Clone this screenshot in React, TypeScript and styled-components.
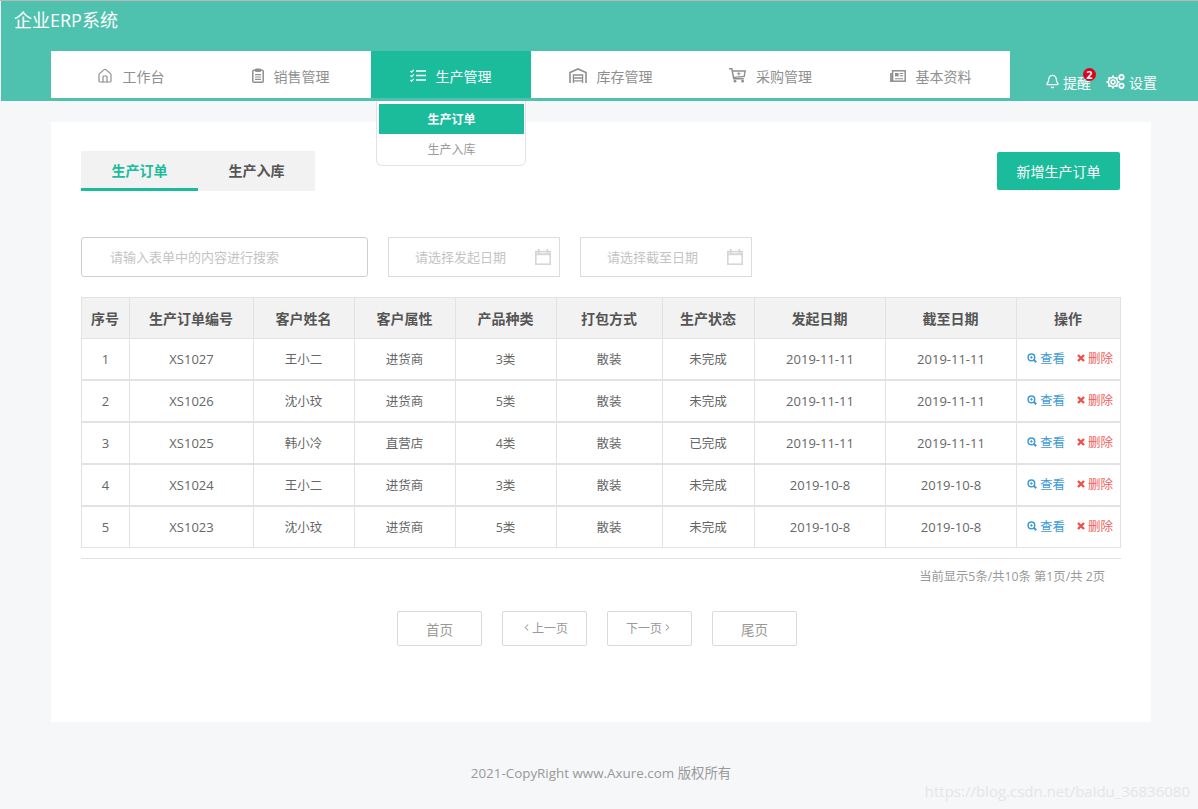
import { createGlobalStyle } from "styled-components";
import styled from "styled-components";
import { Home, ChevronLeft, ChevronRight, Bell } from "lucide-react";

const GlobalStyle = createGlobalStyle`
  html, body { margin: 0; padding: 0; background: #f5f7f9; }
  body { font-family: "Open Sans", "Noto Sans CJK SC", sans-serif; }
  * { box-sizing: border-box; }
`;

function HomeIcon() {
  return <Home size={16} strokeWidth={1.8} />;
}

function ClipboardIcon() {
  return (
    <svg width="12" height="15" viewBox="0 0 12 15" fill="none" stroke="currentColor" strokeWidth="1.5">
      <rect x="0.8" y="2.2" width="10.4" height="12" rx="1" />
      <path d="M3.5 1h5v2.4h-5z" fill="currentColor" strokeWidth="1" />
      <path d="M3 6.6h6M3 9h6M3 11.4h6" strokeWidth="1.1" />
    </svg>
  );
}

function TasksIcon() {
  return (
    <svg width="16" height="13" viewBox="0 0 16 13" fill="none" stroke="currentColor">
      <path d="M6 2h10M6 6.5h10M6 11h10" strokeWidth="1.4" />
      <path d="M.5 2l1.2 1.2L3.8.8M.5 6.5l1.2 1.2 2.1-2.4M.5 11l1.2 1.2 2.1-2.4" strokeWidth="1.2" />
    </svg>
  );
}

function WarehouseIcon() {
  return (
    <svg width="18" height="15" viewBox="0 0 18 15" fill="none" stroke="currentColor">
      <path d="M1 15V4.6L9 1l8 3.6V15" strokeWidth="1.6" />
      <path d="M4.4 15V7h9.2v8M4.4 10h9.2M4.4 12.8h9.2" strokeWidth="1.3" />
    </svg>
  );
}

function CartIcon() {
  return (
    <svg width="17" height="15" viewBox="0 0 17 15" fill="none" stroke="currentColor">
      <path d="M0 .8h2.8l2 10h10" strokeWidth="1.5" />
      <path d="M3.6 3h12.6l-1 5.4-10.2 1" strokeWidth="1.4" />
      <path d="M9.8 4.2v3.2M8.2 5.8h3.2" strokeWidth="1.1" />
      <circle cx="6" cy="13.2" r="1.4" fill="currentColor" stroke="none" />
      <circle cx="13.6" cy="13.2" r="1.4" fill="currentColor" stroke="none" />
    </svg>
  );
}

function NewsIcon() {
  return (
    <svg width="16" height="12" viewBox="0 0 16 12" fill="none" stroke="currentColor">
      <rect x="2.6" y="0.8" width="12.6" height="10.4" strokeWidth="1.5" />
      <path d="M1 3v8.2h2" strokeWidth="1.8" />
      <rect x="5" y="3" width="3.6" height="3.4" fill="currentColor" stroke="none" />
      <path d="M9.6 3.5h3.6M9.6 5.8h3.6M5 8.7h8.2" strokeWidth="1.1" />
    </svg>
  );
}

function Gears() {
  return (
    <svg width="20" height="17" viewBox="0 0 20 17" fill="none" stroke="#fff">
      <circle cx="7" cy="9" r="2" strokeWidth="1.5" />
      <circle cx="7" cy="9" r="4.6" strokeWidth="1.6" />
      <path d="M7 2.5v2M7 13.5v2M.5 9h2M11.5 9h2M2.4 4.4l1.4 1.4M10.2 12.2l1.4 1.4M2.4 13.6l1.4-1.4M10.2 5.8l1.4-1.4" strokeWidth="2" />
      <circle cx="15.5" cy="4.2" r="2.2" strokeWidth="1.8" />
      <circle cx="15.5" cy="12.8" r="2.2" strokeWidth="1.8" />
    </svg>
  );
}

function CalendarIcon() {
  return (
    <svg width="16" height="16" viewBox="0 0 16 16" fill="none" stroke="#d6d6d6">
      <rect x="0.8" y="2.6" width="14.4" height="12.6" strokeWidth="1.6" />
      <path d="M.8 5.2h14.4" strokeWidth="2" />
      <path d="M3.6 0v4M12.4 0v4" strokeWidth="1.8" />
    </svg>
  );
}

function ViewIcon() {
  return (
    <svg width="10" height="10" viewBox="0 0 10 10" fill="none" stroke="#3f9bd8">
      <circle cx="4.4" cy="4.4" r="3.3" strokeWidth="1.5" />
      <path d="M6.8 6.8L9.2 9.2" strokeWidth="2" />
      <path d="M3 4.4h2.8M4.4 3v2.8" strokeWidth="0.9" />
    </svg>
  );
}

function DeleteIcon() {
  return (
    <svg width="8" height="8" viewBox="0 0 8 8" fill="none" stroke="#f0504a" strokeWidth="2.4">
      <path d="M1 1l6 6M7 1L1 7" />
    </svg>
  );
}

const navItems = [
  { label: "工作台", Icon: HomeIcon },
  { label: "销售管理", Icon: ClipboardIcon },
  { label: "生产管理", Icon: TasksIcon, active: true },
  { label: "库存管理", Icon: WarehouseIcon },
  { label: "采购管理", Icon: CartIcon },
  { label: "基本资料", Icon: NewsIcon },
];

const columns = [
  { title: "序号", width: 48 },
  { title: "生产订单编号", width: 124 },
  { title: "客户姓名", width: 101 },
  { title: "客户属性", width: 101 },
  { title: "产品种类", width: 101 },
  { title: "打包方式", width: 106 },
  { title: "生产状态", width: 92 },
  { title: "发起日期", width: 131 },
  { title: "截至日期", width: 131 },
  { title: "操作", width: 104 },
];

const rows = [
  ["1", "XS1027", "王小二", "进货商", "3类", "散装", "未完成", "2019-11-11", "2019-11-11"],
  ["2", "XS1026", "沈小玟", "进货商", "5类", "散装", "未完成", "2019-11-11", "2019-11-11"],
  ["3", "XS1025", "韩小冷", "直营店", "4类", "散装", "已完成", "2019-11-11", "2019-11-11"],
  ["4", "XS1024", "王小二", "进货商", "3类", "散装", "未完成", "2019-10-8", "2019-10-8"],
  ["5", "XS1023", "沈小玟", "进货商", "5类", "散装", "未完成", "2019-10-8", "2019-10-8"],
];

export default function App() {
  return (
    <Page>
      <GlobalStyle />
      <Header>
        <Title>企业ERP系统</Title>
        <HeaderRow>
          <Nav>
            {navItems.map(({ label, Icon, active }) => (
              <NavItem key={label} $active={active}>
                <Icon />
                <span>{label}</span>
                {active && (
                  <Dropdown>
                    <DropdownItem $active>生产订单</DropdownItem>
                    <DropdownItem>生产入库</DropdownItem>
                  </Dropdown>
                )}
              </NavItem>
            ))}
          </Nav>
          <HeaderActions>
            <HeaderAction>
              <Bell size={15} strokeWidth={2} />
              <span>提醒</span>
              <Badge>2</Badge>
            </HeaderAction>
            <HeaderAction>
              <Gears />
              <span>设置</span>
            </HeaderAction>
          </HeaderActions>
        </HeaderRow>
      </Header>

      <Card>
        <TopRow>
          <Tabs>
            <Tab $active>生产订单</Tab>
            <Tab>生产入库</Tab>
          </Tabs>
          <AddButton>新增生产订单</AddButton>
        </TopRow>

        <Filters>
          <SearchBox>请输入表单中的内容进行搜索</SearchBox>
          <DateBox>
            请选择发起日期
            <CalendarIcon />
          </DateBox>
          <DateBox>
            请选择截至日期
            <CalendarIcon />
          </DateBox>
        </Filters>

        <Table>
          <colgroup>
            {columns.map((c) => (
              <col key={c.title} width={c.width} />
            ))}
          </colgroup>
          <thead>
            <tr>
              {columns.map((c) => (
                <Th key={c.title}>{c.title}</Th>
              ))}
            </tr>
          </thead>
          <tbody>
            {rows.map((row) => (
              <tr key={row[0]}>
                {row.map((cell, i) => (
                  <Td key={i} $cjk={i >= 2 && i <= 6}>
                    {cell}
                  </Td>
                ))}
                <Td>
                  <Actions>
                    <ActionLink $color="#3f9bd8">
                      <ViewIcon />
                      查看
                    </ActionLink>
                    <ActionLink $color="#f0605a">
                      <DeleteIcon />
                      删除
                    </ActionLink>
                  </Actions>
                </Td>
              </tr>
            ))}
          </tbody>
        </Table>

        <PageInfo>当前显示5条/共10条 第1页/共 2页</PageInfo>

        <Pagination>
          <PageButton>首页</PageButton>
          <PageButton $small>
            <ChevronLeft size={11} strokeWidth={2.2} />
            上一页
          </PageButton>
          <PageButton $small>
            下一页
            <ChevronRight size={11} strokeWidth={2.2} />
          </PageButton>
          <PageButton>尾页</PageButton>
        </Pagination>
      </Card>

      <Footer>2021-CopyRight www.Axure.com 版权所有</Footer>
      <Watermark>https://blog.csdn.net/baidu_36836080</Watermark>
    </Page>
  );
}

const Page = styled.div`
  position: relative;
  width: 1198px;
  height: 809px;
  overflow: hidden;
  border-top: 1px solid #b9b9b9;
`;

const Header = styled.header`
  height: 100px;
  margin-left: 1px;
  background: #4fc1af;
  display: flex;
  flex-direction: column;
`;

const Title = styled.div`
  height: 50px;
  padding: 6px 0 0 13px;
  font-size: 18px;
  line-height: 27px;
  color: #fff;
`;

const HeaderRow = styled.div`
  display: flex;
  padding-left: 50px;
`;

const Nav = styled.nav`
  display: flex;
  width: 959px;
  height: 47px;
  background: #fff;
`;

const NavItem = styled.div<{ $active?: boolean }>`
  position: relative;
  flex: 0 0 160px;
  display: flex;
  align-items: center;
  justify-content: center;
  gap: 10px;
  padding: 2px 1px 0 0;
  font-size: 14px;
  color: ${(p) => (p.$active ? "#fff" : "#8f8f8f")};
  background: ${(p) => (p.$active ? "#1abc9c" : "transparent")};
`;

const Dropdown = styled.div`
  position: absolute;
  top: 50px;
  left: 5px;
  width: 150px;
  height: 65px;
  padding: 3px 1px 0 2px;
  background: #fff;
  border: 1px solid #e3e3e3;
  border-top: none;
  border-radius: 0 0 6px 6px;
  z-index: 5;
`;

const DropdownItem = styled.div<{ $active?: boolean }>`
  height: 30px;
  line-height: 32px;
  text-align: center;
  font-size: 12px;
  font-weight: ${(p) => (p.$active ? 700 : 400)};
  color: ${(p) => (p.$active ? "#fff" : "#9a9a9a")};
  background: ${(p) => (p.$active ? "#1abc9c" : "#fff")};
`;

const HeaderActions = styled.div`
  display: flex;
  align-items: center;
  gap: 15px;
  padding: 14px 0 0 35px;
`;

const HeaderAction = styled.div`
  position: relative;
  display: flex;
  align-items: center;
  gap: 3px;
  font-size: 14px;
  color: #fff;
`;

const Badge = styled.span`
  position: absolute;
  top: -4px;
  right: -5px;
  width: 13px;
  height: 13px;
  border-radius: 50%;
  background: #e0001b;
  color: #fff;
  font-size: 11px;
  font-weight: 700;
  line-height: 13px;
  text-align: center;
`;

const Card = styled.main`
  width: 1100px;
  height: 600px;
  margin: 21px 0 0 51px;
  padding: 29px 30px 0;
  background: #fff;
`;

const TopRow = styled.div`
  display: flex;
  align-items: center;
  justify-content: space-between;
  height: 40px;
  padding-right: 1px;
`;

const Tabs = styled.div`
  display: flex;
  background: #f2f2f2;
`;

const Tab = styled.div<{ $active?: boolean }>`
  width: 117px;
  height: 40px;
  line-height: 40px;
  text-align: center;
  font-size: 14px;
  font-weight: 700;
  color: ${(p) => (p.$active ? "#1abc9c" : "#555")};
  border-bottom: 3px solid ${(p) => (p.$active ? "#1abc9c" : "transparent")};
`;

const AddButton = styled.button`
  width: 123px;
  height: 38px;
  padding: 0;
  border: none;
  border-radius: 2px;
  background: #1abc9c;
  color: #fff;
  font-family: inherit;
  font-size: 14px;
`;

const Filters = styled.div`
  display: flex;
  gap: 20px;
  margin-top: 46px;
`;

const SearchBox = styled.div`
  width: 287px;
  height: 40px;
  padding-left: 28px;
  line-height: 38px;
  border: 1px solid #cfcfcf;
  border-radius: 3px;
  font-size: 13px;
  color: #c4c4c4;
`;

const DateBox = styled.div`
  width: 172px;
  height: 40px;
  padding: 0 8px 1px 26px;
  display: flex;
  align-items: center;
  justify-content: space-between;
  border: 1px solid #dcdcdc;
  font-size: 13px;
  color: #c4c4c4;
`;

const Table = styled.table`
  width: 1039px;
  margin-top: 20px;
  table-layout: fixed;
  border-collapse: separate;
  border-spacing: 0;
  border-top: 1px solid #e2e2e2;
  border-left: 1px solid #e2e2e2;
`;

const Th = styled.th`
  height: 41px;
  padding: 0 1px 0 0;
  background: #f2f2f2;
  border-right: 1px solid #e2e2e2;
  border-bottom: 1px solid #e2e2e2;
  font-size: 14px;
  font-weight: 700;
  color: #555;
  text-align: center;
`;

const Td = styled.td<{ $cjk?: boolean }>`
  height: 42px;
  padding: ${(p) => (p.$cjk ? "0 1px 2px 0" : "0")};
  border-right: 1px solid #e2e2e2;
  border-bottom: 2px solid #e2e2e2;
  font-size: ${(p) => (p.$cjk ? "12.5px" : "13px")};
  color: #666;
  text-align: center;

  tr:last-child & {
    height: 41px;
    border-bottom-width: 1px;
  }
`;

const Actions = styled.div`
  display: flex;
  gap: 12px;
  padding: 0 0 3px 10px;
`;

const ActionLink = styled.span<{ $color: string }>`
  display: inline-flex;
  align-items: center;
  gap: 3px;
  font-size: 12.5px;
  color: ${(p) => p.$color};
`;

const PageInfo = styled.div`
  margin-top: 10px;
  padding: 9px 16px 0 0;
  border-top: 1px solid #e2e2e2;
  font-size: 12.3px;
  line-height: 18px;
  text-align: right;
  color: #999;
`;

const Pagination = styled.div`
  display: flex;
  gap: 20px;
  margin: 25px 0 0 316px;
`;

const PageButton = styled.div<{ $small?: boolean }>`
  width: 85px;
  height: 35px;
  display: flex;
  align-items: center;
  justify-content: center;
  padding: ${(p) => (p.$small ? "0 0 2px" : "1px 0 0")};
  border: 1px solid #d9d9d9;
  border-radius: 2px;
  font-size: ${(p) => (p.$small ? "12px" : "13.5px")};
  color: #999;
`;

const Footer = styled.footer`
  margin-top: 42px;
  padding-left: 4px;
  text-align: center;
  font-size: 13.4px;
  line-height: 18px;
  color: #999;
`;

const Watermark = styled.div`
  position: absolute;
  right: 8px;
  bottom: 8px;
  font-size: 15px;
  line-height: 20px;
  color: #e4e6e8;
`;
